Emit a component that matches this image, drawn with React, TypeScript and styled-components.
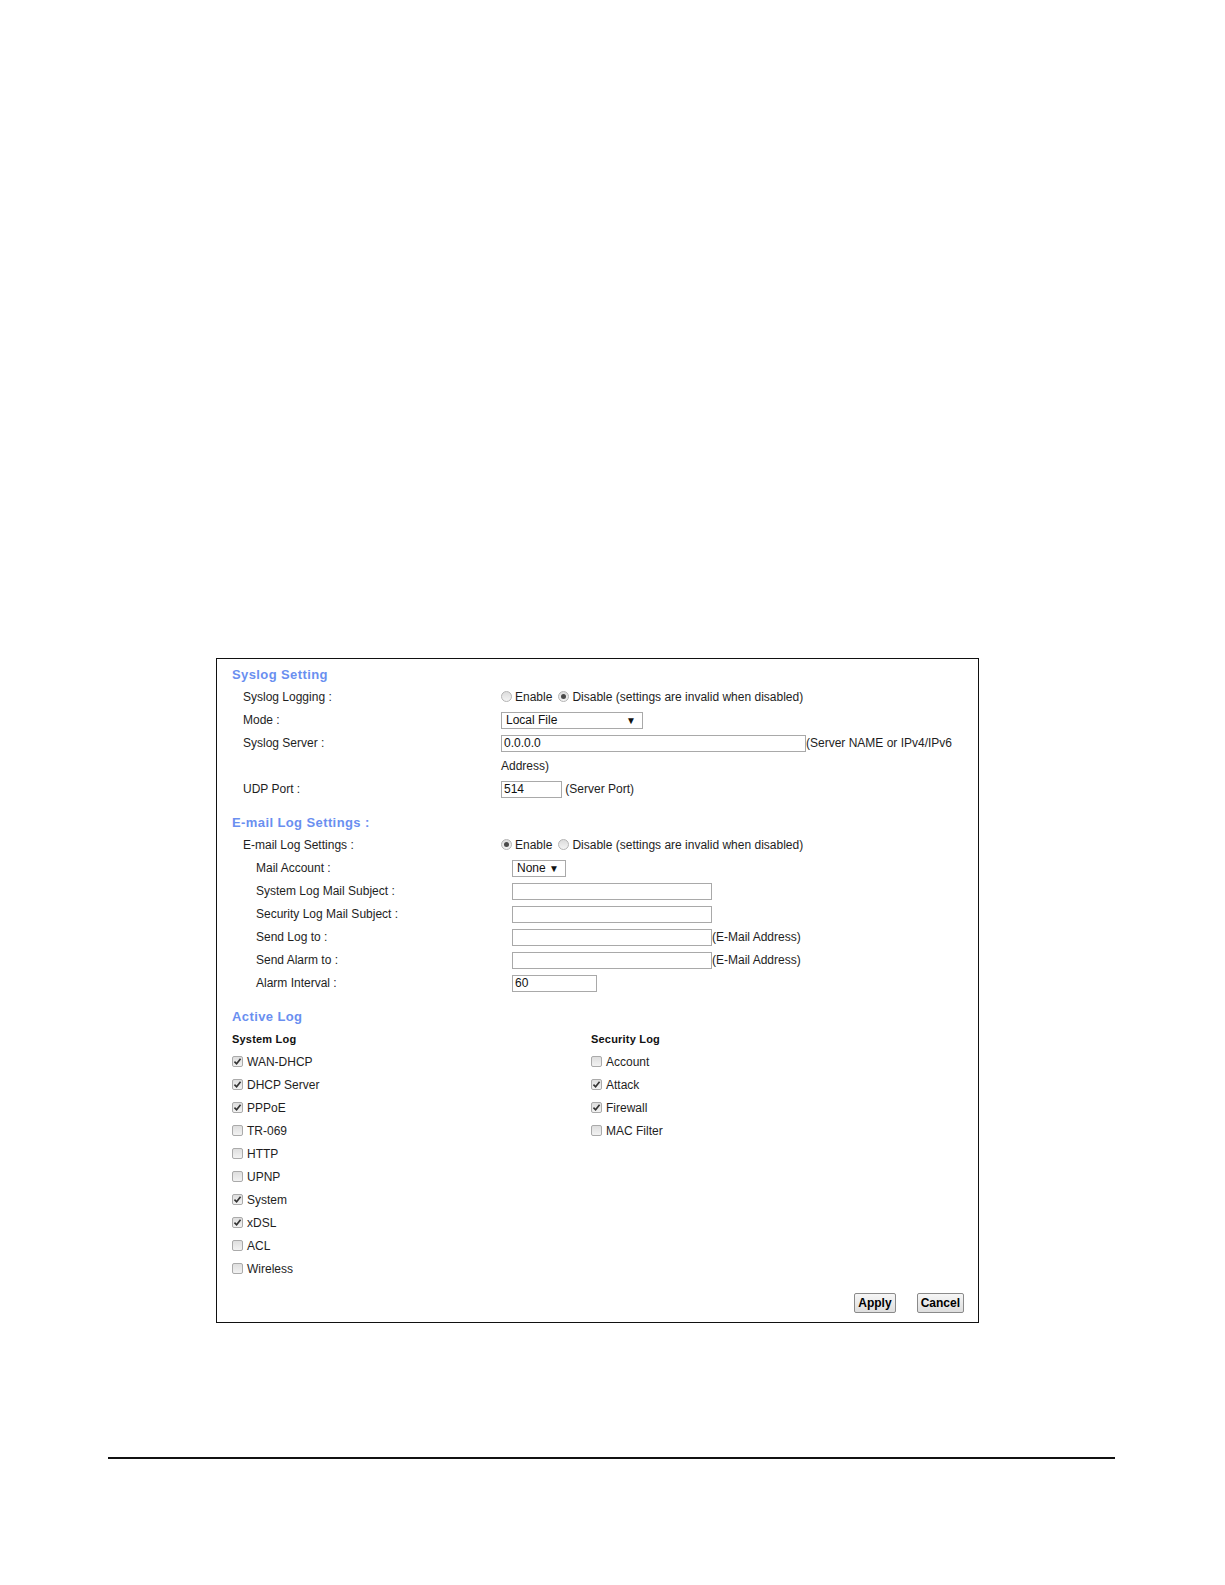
import React from 'react'
import styled, { createGlobalStyle } from 'styled-components'

const GlobalStyle = createGlobalStyle`
  html, body {
    margin: 0;
    padding: 0;
    background: #fff;
  }
  body {
    font-family: "Liberation Sans", Arial, sans-serif;
    font-size: 12px;
    color: #222;
  }
`

type Option = { label: string; checked: boolean }

const systemLogs: Option[] = [
  { label: 'WAN-DHCP', checked: true },
  { label: 'DHCP Server', checked: true },
  { label: 'PPPoE', checked: true },
  { label: 'TR-069', checked: false },
  { label: 'HTTP', checked: false },
  { label: 'UPNP', checked: false },
  { label: 'System', checked: true },
  { label: 'xDSL', checked: true },
  { label: 'ACL', checked: false },
  { label: 'Wireless', checked: false },
]

const securityLogs: Option[] = [
  { label: 'Account', checked: false },
  { label: 'Attack', checked: true },
  { label: 'Firewall', checked: true },
  { label: 'MAC Filter', checked: false },
]

const Radio = ({ checked, label }: { checked: boolean; label: string }) => (
  <Choice>
    <RadioDot $checked={checked} />
    {label}
  </Choice>
)

const Check = ({ checked, label }: { checked: boolean; label: string }) => (
  <CheckRow>
    <CheckBox>
      {checked && (
        <svg width="9" height="9" viewBox="0 0 10 10">
          <path d="M1.6 5.2 L4 7.6 L8.4 2" fill="none" stroke="#333" strokeWidth="1.8" />
        </svg>
      )}
    </CheckBox>
    {label}
  </CheckRow>
)

const App = () => {
  return (
    <Page>
      <GlobalStyle />
      <Panel>
        <Heading>Syslog Setting</Heading>
        <Row>
          <Label>Syslog Logging :</Label>
          <Value>
            <Radio checked={false} label="Enable" />
            <Radio checked label="Disable (settings are invalid when disabled)" />
          </Value>
        </Row>
        <Row>
          <Label>Mode :</Label>
          <Value>
            <Select $width={142}>Local File</Select>
          </Value>
        </Row>
        <Row>
          <Label>Syslog Server :</Label>
          <Value>
            <TextBox $width={305}>0.0.0.0</TextBox>
            (Server NAME or IPv4/IPv6 Address)
          </Value>
        </Row>
        <Row>
          <Label>UDP Port :</Label>
          <Value>
            <TextBox $width={61}>514</TextBox> (Server Port)
          </Value>
        </Row>

        <Heading $spaced>E-mail Log Settings :</Heading>
        <Row>
          <Label>E-mail Log Settings :</Label>
          <Value>
            <Radio checked label="Enable" />
            <Radio checked={false} label="Disable (settings are invalid when disabled)" />
          </Value>
        </Row>
        <Row $sub>
          <Label>Mail Account :</Label>
          <Value>
            <Select $width={54}>None</Select>
          </Value>
        </Row>
        <Row $sub>
          <Label>System Log Mail Subject :</Label>
          <Value>
            <TextBox $width={200} />
          </Value>
        </Row>
        <Row $sub>
          <Label>Security Log Mail Subject :</Label>
          <Value>
            <TextBox $width={200} />
          </Value>
        </Row>
        <Row $sub>
          <Label>Send Log to :</Label>
          <Value>
            <TextBox $width={200} />
            (E-Mail Address)
          </Value>
        </Row>
        <Row $sub>
          <Label>Send Alarm to :</Label>
          <Value>
            <TextBox $width={200} />
            (E-Mail Address)
          </Value>
        </Row>
        <Row $sub>
          <Label>Alarm Interval :</Label>
          <Value>
            <TextBox $width={85}>60</TextBox>
          </Value>
        </Row>

        <Heading $spaced>Active Log</Heading>
        <LogColumns>
          <div>
            <ColumnTitle>System Log</ColumnTitle>
            {systemLogs.map((o) => (
              <Check key={o.label} {...o} />
            ))}
          </div>
          <div>
            <ColumnTitle>Security Log</ColumnTitle>
            {securityLogs.map((o) => (
              <Check key={o.label} {...o} />
            ))}
          </div>
        </LogColumns>

        <Actions>
          <Button type="button">Apply</Button>
          <Button type="button">Cancel</Button>
        </Actions>
      </Panel>
      <Rule />
    </Page>
  )
}

export default App

const Page = styled.div`
  display: flex;
  flex-direction: column;
  align-items: flex-start;

  width: 1225px;
  min-height: 1585px;
  padding-top: 658px;
  box-sizing: border-box;
`

const Panel = styled.div`
  width: 763px;
  margin-left: 216px;
  box-sizing: border-box;
  border: 1px solid #111;
  padding: 4px 14px 9px 15px;
`

const Heading = styled.div<{ $spaced?: boolean }>`
  margin-top: ${({ $spaced }) => ($spaced ? 10 : 0)}px;

  line-height: 23px;
  font-size: 13px;
  font-weight: bold;
  letter-spacing: 0.4px;
  color: #6a8ff0;
`

const Row = styled.div<{ $sub?: boolean }>`
  display: grid;
  grid-template-columns: 258px 1fr;

  margin-left: 11px;
  line-height: 23px;

  & > :first-child {
    padding-left: ${({ $sub }) => ($sub ? 13 : 0)}px;
  }
  & > :last-child {
    padding-left: ${({ $sub }) => ($sub ? 11 : 0)}px;
  }
`

const Label = styled.div`
  color: #1e1e1e;
`

const Value = styled.div`
  max-width: 463px;
  color: #1e1e1e;
`

const Choice = styled.span`
  display: inline-flex;
  align-items: center;
  margin-right: 6px;
  vertical-align: top;
`

const RadioDot = styled.span<{ $checked: boolean }>`
  position: relative;
  display: inline-block;

  width: 11px;
  height: 11px;
  box-sizing: border-box;
  margin: -2px 3px 0 0;
  border: 1px solid #b4b4b4;
  border-radius: 50%;

  background: linear-gradient(#dcdcdc, #f4f4f4);

  &::after {
    content: '';
    display: ${({ $checked }) => ($checked ? 'block' : 'none')};
    position: absolute;
    top: 2px;
    left: 2px;

    width: 5px;
    height: 5px;
    border-radius: 50%;
    background: #4a4a4a;
  }
`

const Select = styled.span<{ $width: number }>`
  display: inline-flex;
  align-items: center;
  justify-content: space-between;
  vertical-align: top;

  width: ${({ $width }) => $width}px;
  height: 17px;
  box-sizing: border-box;
  margin-top: 3px;
  padding: 0 6px 0 4px;
  border: 1px solid #a9a9a9;

  line-height: 15px;
  color: #111;
  background: #fff;

  &::after {
    content: '▼';
    font-size: 10px;
    color: #111;
  }
`

const TextBox = styled.span<{ $width: number }>`
  display: inline-block;
  vertical-align: top;

  width: ${({ $width }) => $width}px;
  height: 17px;
  box-sizing: border-box;
  margin-top: 3px;
  padding: 0 2px;
  border: 1px solid #a9a9a9;

  line-height: 15px;
  color: #111;
  background: #fff;
`

const LogColumns = styled.div`
  display: grid;
  grid-template-columns: 359px 1fr;
  line-height: 23px;
`

const ColumnTitle = styled.div`
  font-size: 11px;
  font-weight: bold;
  letter-spacing: 0.2px;
  color: #111;
`

const CheckRow = styled.div`
  display: flex;
  align-items: center;
  height: 23px;
  color: #1e1e1e;
`

const CheckBox = styled.span`
  display: inline-flex;
  align-items: center;
  justify-content: center;

  width: 11px;
  height: 11px;
  box-sizing: border-box;
  margin: -3px 4px 0 0;
  border: 1px solid #aaa;
  border-radius: 2px;

  background: linear-gradient(#dedede, #f2f2f2);
`

const Actions = styled.div`
  display: flex;
  justify-content: flex-end;
  gap: 21px;
  margin-top: 12px;
`

const Button = styled.button`
  height: 20px;
  padding: 0 3px;
  border: 1px solid #8a8a8a;
  border-radius: 2px;

  background: linear-gradient(#f6f6f6, #dedede);
  color: #000;

  font-family: "Liberation Sans", Arial, sans-serif;
  font-size: 12px;
  font-weight: bold;
  cursor: pointer;
`

const Rule = styled.div`
  width: 1007px;
  height: 0;
  margin-top: 134px;
  margin-left: 108px;
  border-top: 2px solid #111;
`
